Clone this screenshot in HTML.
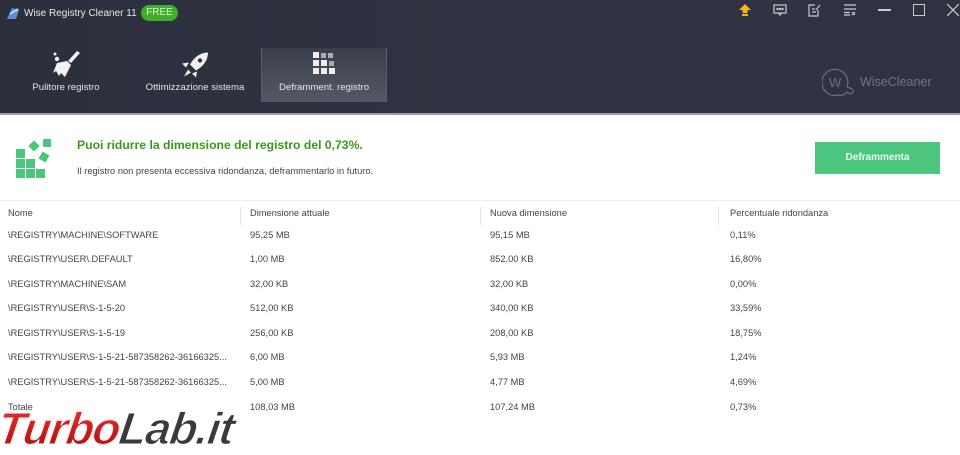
<!DOCTYPE html>
<html><head><meta charset="utf-8">
<style>
*{margin:0;padding:0;box-sizing:border-box}
body{width:960px;height:448px;overflow:hidden;font-family:"Liberation Sans","DejaVu Sans",sans-serif;background:#fff;position:relative}
.hdr{position:absolute;left:0;top:0;width:960px;height:115px;background:linear-gradient(90deg,#2c2f3c,#303442 60%,#2f3341);border-bottom:2px solid #9aa0ab}
.title{position:absolute;left:24px;top:8px;color:#e8e8ea;font-size:10px}
.free{position:absolute;left:141px;top:5px;width:37px;height:16px;border-radius:8px;background:#3fae2a;color:#d8f5cf;font-size:10px;text-align:center;line-height:16px}
.tab{position:absolute;top:48px;height:54px;color:#e6e7ea;font-size:9.6px;text-align:center}
.tab .lbl{position:absolute;bottom:9px;left:0;right:0}
.active{background:linear-gradient(#3a3e4b,#555966);border-left:1px solid #5a5e6a;border-right:1px solid #5a5e6a}
.banner{position:absolute;top:117px;left:0;width:960px;height:84px;background:#fff;border-bottom:1px solid #eee}
.h1{position:absolute;left:77px;top:138px;color:#3a9a1c;font-weight:bold;font-size:12.2px}
.sub{position:absolute;left:77px;top:166px;color:#444;font-size:9.3px}
.btn{position:absolute;left:815px;top:142px;width:125px;height:32px;background:#4cc57f;color:#eafbef;font-weight:bold;font-size:10px;text-align:center;line-height:32px}
.row{position:absolute;left:0;width:960px;font-size:9.3px;color:#444}
.row span{position:absolute;top:0}
.sep{position:absolute;top:207px;width:1px;height:18px;background:#e4e4e4}
.wm{position:absolute;left:-2px;top:403px;font-family:"Liberation Sans",sans-serif;font-weight:bold;font-style:italic;font-size:45px;letter-spacing:-1px;transform:skewX(-8deg)}
</style></head><body>
<div class="hdr">
  <svg style="position:absolute;left:4px;top:4px" width="18" height="18" viewBox="0 0 18 18"><path d="M3 15 L8 4 L15 6 L12 15 Z" fill="#5a8fd0"/><path d="M6 10 L14 5" stroke="#bcd3f0" stroke-width="2"/></svg>
  <div class="title">Wise Registry Cleaner 11</div>
  <div class="free">FREE</div>
  <svg style="position:absolute;left:739px;top:4px" width="12" height="12" viewBox="0 0 12 12"><path d="M6 0 L12 6 H8.5 V9 H3.5 V6 H0 Z" fill="#f2b718"/><rect x="3" y="10" width="6" height="2" fill="#f2b718"/></svg>
  <svg style="position:absolute;left:773px;top:4px" width="14" height="12" viewBox="0 0 14 12" fill="none" stroke="#c8cad0" stroke-width="1.2"><rect x="1" y="1" width="12" height="8"/><path d="M5 9 L7 11 L9 9"/><circle cx="4.5" cy="5" r=".6" fill="#c8cad0"/><circle cx="7" cy="5" r=".6" fill="#c8cad0"/><circle cx="9.5" cy="5" r=".6" fill="#c8cad0"/></svg>
  <svg style="position:absolute;left:808px;top:3px" width="13" height="14" viewBox="0 0 13 14" fill="none" stroke="#c8cad0" stroke-width="1.2"><path d="M10 7 V13 H1 V2 H7"/><path d="M4 6 H7 M4 9 H8 M8 7 L12 2"/></svg>
  <svg style="position:absolute;left:843px;top:4px" width="14" height="12" viewBox="0 0 14 12" fill="none" stroke="#c8cad0" stroke-width="1.2"><path d="M1 1 H13 M1 5 H13 M1 8.5 H7 M1 11 H7 M9 8 L12 11 M9 11 L12 8"/></svg>
  <div style="position:absolute;left:878px;top:9px;width:13px;height:1.5px;background:#c8cad0"></div>
  <div style="position:absolute;left:913px;top:4px;width:12px;height:12px;border:1.3px solid #c8cad0"></div>
  <svg style="position:absolute;left:947px;top:4px" width="12" height="12" viewBox="0 0 12 12" stroke="#c8cad0" stroke-width="1.3"><path d="M0 0 L12 12 M12 0 L0 12"/></svg>
  <div class="tab" style="left:16px;width:100px"><svg style="position:absolute;left:35px;top:2px" width="30" height="28" viewBox="0 0 30 26" fill="#f2f2f4"><path d="M26 0 L29 2 L20 12 L17 10 Z"/><path d="M6 12 L16 10 L20 14 L14 26 L10 22 L8 25 L5 20 L2 22 Z"/><circle cx="4" cy="3" r="1.5"/><circle cx="6" cy="8" r="2.2"/></svg><div class="lbl">Pulitore registro</div></div>
  <div class="tab" style="left:140px;width:110px"><svg style="position:absolute;left:40px;top:3px" width="30" height="28" viewBox="0 0 30 27" fill="#f2f2f4"><path d="M28 1 C20 1 14 6 10 13 L16 19 C23 15 28 9 28 1 Z"/><circle cx="20" cy="9" r="2.2" fill="#30343f"/><path d="M9 11 L2 12 L6 16 Z M17 20 L16 26 L12 22 Z M8 18 L4 25 L11 21 Z"/></svg><div class="lbl">Ottimizzazione sistema</div></div>
  <div class="tab active" style="left:261px;width:126px"><svg style="position:absolute;left:49px;top:4px" width="26" height="26" viewBox="0 0 26 26" fill="#eeeef2"><rect x="2" y="0" width="6" height="6"/><rect x="10" y="1" width="5" height="5" fill="#aab"/><rect x="17" y="1" width="5" height="5" fill="#aab"/><rect x="2" y="8" width="6" height="6"/><rect x="10" y="8" width="6" height="6"/><rect x="18" y="9" width="5" height="5" fill="#aab"/><rect x="2" y="16" width="6" height="6"/><rect x="10" y="16" width="6" height="6"/><rect x="18" y="16" width="6" height="6"/></svg><div class="lbl">Deframment. registro</div></div>
  <svg style="position:absolute;left:822px;top:68px" width="36" height="30" viewBox="0 0 36 30" fill="none" stroke="#6c717e" stroke-width="1.2"><path d="M25 19 A13 13 0 1 0 16 27 C20 28 22 27 25 24 C27 26 32 27 31 22 C30 20 27 20 25 19"/><text x="7" y="19" font-size="13" fill="#6c717e" stroke="none" font-family="Liberation Sans">W</text></svg>
  <div style="position:absolute;left:860px;top:75px;color:#717684;font-size:12.5px">WiseCleaner</div>
</div>
<div class="banner"></div>
<svg style="position:absolute;left:16px;top:137px" width="42" height="42" viewBox="0 0 42 42" fill="#4cc57f"><rect x="0" y="12" width="9" height="9"/><rect x="0" y="22" width="9" height="9"/><rect x="10" y="22" width="9" height="9"/><rect x="0" y="32" width="9" height="9"/><rect x="10" y="32" width="9" height="9"/><rect x="20" y="32" width="9" height="9"/><rect x="27" y="2" width="8" height="8"/><rect x="14" y="5" width="8" height="8" transform="rotate(45 18 9)"/><rect x="24" y="16" width="8" height="8" transform="rotate(30 28 20)"/></svg>
<div class="h1">Puoi ridurre la dimensione del registro del 0,73%.</div>
<div class="sub">Il registro non presenta eccessiva ridondanza, deframmentarlo in futuro.</div>
<div class="btn">Deframmenta</div>
<div class="sep" style="left:240px"></div><div class="sep" style="left:480px"></div><div class="sep" style="left:718px"></div>
<div class="row" style="top:208px"><span style="left:8px">Nome</span><span style="left:250px">Dimensione attuale</span><span style="left:490px">Nuova dimensione</span><span style="left:730px">Percentuale ridondanza</span></div>
<div class="row" style="top:230px"><span style="left:8px">\REGISTRY\MACHINE\SOFTWARE</span><span style="left:250px">95,25 MB</span><span style="left:490px">95,15 MB</span><span style="left:730px">0,11%</span></div>
<div class="row" style="top:254px"><span style="left:8px">\REGISTRY\USER\.DEFAULT</span><span style="left:250px">1,00 MB</span><span style="left:490px">852,00 KB</span><span style="left:730px">16,80%</span></div>
<div class="row" style="top:279px"><span style="left:8px">\REGISTRY\MACHINE\SAM</span><span style="left:250px">32,00 KB</span><span style="left:490px">32,00 KB</span><span style="left:730px">0,00%</span></div>
<div class="row" style="top:303px"><span style="left:8px">\REGISTRY\USER\S-1-5-20</span><span style="left:250px">512,00 KB</span><span style="left:490px">340,00 KB</span><span style="left:730px">33,59%</span></div>
<div class="row" style="top:328px"><span style="left:8px">\REGISTRY\USER\S-1-5-19</span><span style="left:250px">256,00 KB</span><span style="left:490px">208,00 KB</span><span style="left:730px">18,75%</span></div>
<div class="row" style="top:352px"><span style="left:8px">\REGISTRY\USER\S-1-5-21-587358262-36166325...</span><span style="left:250px">6,00 MB</span><span style="left:490px">5,93 MB</span><span style="left:730px">1,24%</span></div>
<div class="row" style="top:377px"><span style="left:8px">\REGISTRY\USER\S-1-5-21-587358262-36166325...</span><span style="left:250px">5,00 MB</span><span style="left:490px">4,77 MB</span><span style="left:730px">4,69%</span></div>
<div class="row" style="top:402px"><span style="left:8px">Totale</span><span style="left:250px">108,03 MB</span><span style="left:490px">107,24 MB</span><span style="left:730px">0,73%</span></div>
<div class="wm"><span style="background:linear-gradient(#f03030,#a80d0d);-webkit-background-clip:text;color:transparent;-webkit-text-stroke:1px #fff">Turbo</span><span style="color:#3a3a3a;-webkit-text-stroke:1px #fff">Lab.it</span></div>
</body></html>
